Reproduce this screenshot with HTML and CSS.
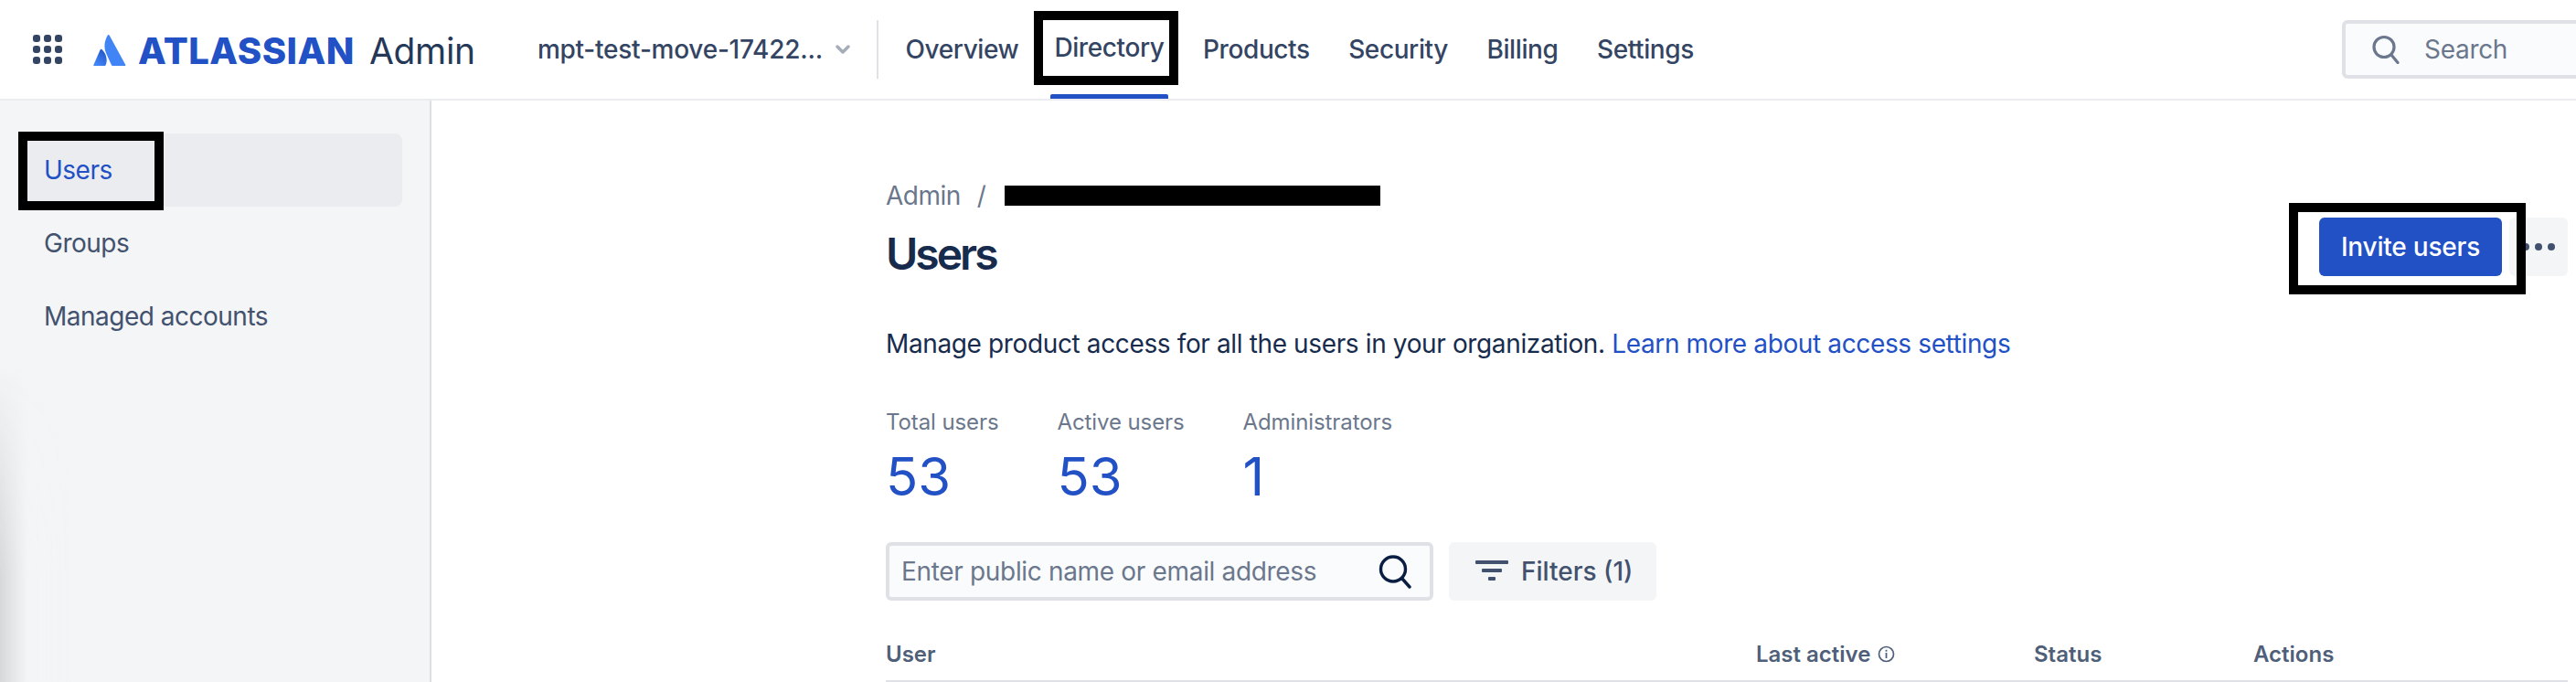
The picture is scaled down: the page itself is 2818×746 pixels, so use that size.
FILE: index.html
```html
<!DOCTYPE html>
<html lang="en">
<head>
<meta charset="utf-8">
<title>Users - Atlassian Admin</title>
<link rel="stylesheet" href="styles.css">
</head>
<body>
<header class="topbar">
  <svg class="apps" width="32" height="32" viewBox="0 0 32 32" aria-hidden="true">
    <g fill="#344563">
      <rect x="0" y="0" width="8" height="8" rx="3"/><rect x="12" y="0" width="8" height="8" rx="3"/><rect x="24" y="0" width="8" height="8" rx="3"/>
      <rect x="0" y="12" width="8" height="8" rx="3"/><rect x="12" y="12" width="8" height="8" rx="3"/><rect x="24" y="12" width="8" height="8" rx="3"/>
      <rect x="0" y="24" width="8" height="8" rx="3"/><rect x="12" y="24" width="8" height="8" rx="3"/><rect x="24" y="24" width="8" height="8" rx="3"/>
    </g>
  </svg>
  <svg class="mark" width="36" height="36" viewBox="0 0 36 36" aria-hidden="true">
    <defs>
      <linearGradient id="markGrad" x1="16" y1="18" x2="4" y2="33" gradientUnits="userSpaceOnUse">
        <stop offset="0" stop-color="#1f4fc4"/>
        <stop offset="1" stop-color="#4084f5"/>
      </linearGradient>
    </defs>
    <path fill="url(#markGrad)" d="M7.6 17.4 0.4 33.9C0 34.6.4 35 1.1 35H12.6C13 35 13.4 34.8 13.6 34.3 15.8 29.6 14.8 22.2 9.6 17.2 8.9 16.5 8.1 16.6 7.6 17.4Z"/>
    <path fill="#4084f5" d="M15.8 1.6C12.4 7.6 11.2 14.6 14.2 21.4L20 34.2C20.2 34.7 20.6 35 21.2 35H34.4C35.2 35 35.6 34.4 35.2 33.7L17.6 1.6C17.1.7 16.3.7 15.8 1.6Z"/>
  </svg>
  <span class="wordmark">ATLASSIAN</span>
  <span class="product">Admin</span>
  <button class="org">
    <span>mpt-test-move-17422...</span>
    <svg width="16" height="10" viewBox="0 0 16 10" aria-hidden="true"><path d="M2 2l6 6 6-6" fill="none" stroke="#a5adba" stroke-width="3.4" stroke-linecap="round" stroke-linejoin="round"/></svg>
  </button>
  <nav class="nav">
    <a class="nav-item">Overview</a>
    <a class="nav-item nav-item-active">Directory<i class="mark-box mark-box-nav"></i></a>
    <a class="nav-item">Products</a>
    <a class="nav-item">Security</a>
    <a class="nav-item">Billing</a>
    <a class="nav-item">Settings</a>
  </nav>
  <div class="global-search">
    <svg width="32" height="32" viewBox="0 0 32 32" aria-hidden="true"><circle cx="14" cy="13.5" r="11" fill="none" stroke="#6b778c" stroke-width="3.2"/><path d="M22 22l7 8.5" stroke="#6b778c" stroke-width="3.2" stroke-linecap="round"/></svg>
    <span>Search</span>
  </div>
</header>
<div class="shell">
  <aside class="sidebar">
    <a class="side-item side-item-active">Users<i class="mark-box mark-box-side"></i></a>
    <a class="side-item">Groups</a>
    <a class="side-item">Managed accounts</a>
  </aside>
  <main class="content">
    <div class="page-head">
      <div>
        <div class="crumbs"><span>Admin</span><span class="slash">/</span><span class="redacted"></span></div>
        <h1 class="title">Users</h1>
      </div>
      <div class="actions">
        <button class="invite">Invite users<i class="mark-box mark-box-invite"></i></button>
        <button class="more" aria-label="More">
          <svg width="36" height="8" viewBox="0 0 36 8" aria-hidden="true"><g fill="#42526e"><circle cx="4" cy="4" r="4"/><circle cx="18" cy="4" r="4"/><circle cx="32" cy="4" r="4"/></g></svg>
        </button>
      </div>
    </div>
    <p class="desc">Manage product access for all the users in your organization. <a class="link">Learn more about access settings</a></p>
    <div class="stats">
      <div class="stat"><div class="stat-label">Total users</div><div class="stat-value">53</div></div>
      <div class="stat"><div class="stat-label">Active users</div><div class="stat-value">53</div></div>
      <div class="stat"><div class="stat-label">Administrators</div><div class="stat-value">1</div></div>
    </div>
    <div class="toolbar">
      <div class="user-search">
        <span>Enter public name or email address</span>
        <svg width="36" height="37" viewBox="0 0 36 37" aria-hidden="true"><circle cx="16" cy="15.5" r="13.5" fill="none" stroke="#091e42" stroke-width="3.4"/><path d="M25.5 25.5l8.5 9.5" stroke="#091e42" stroke-width="3.4" stroke-linecap="round"/></svg>
      </div>
      <button class="filters">
        <svg width="36" height="24" viewBox="0 0 36 24" aria-hidden="true"><g fill="#42526e"><rect x="0" y="0" width="36" height="4" rx="1"/><rect x="7" y="9" width="22" height="4" rx="1"/><rect x="14" y="18" width="8" height="4" rx="1"/></g></svg>
        <span>Filters (1)</span>
      </button>
    </div>
    <div class="table-head">
      <span>User</span>
      <span class="th-info">Last active
        <svg width="19" height="19" viewBox="0 0 19 19" aria-hidden="true"><circle cx="9.5" cy="9.5" r="8" fill="none" stroke="#505f79" stroke-width="1.7"/><rect x="8.6" y="8" width="1.8" height="6" fill="#505f79"/><rect x="8.6" y="4.8" width="1.8" height="1.9" fill="#505f79"/></svg>
      </span>
      <span>Status</span>
      <span>Actions</span>
    </div>
  </main>
</div>
</body>
</html>
```
FILE: styles.css
```css
* { box-sizing: border-box; }
html, body { margin: 0; height: 746px; overflow: hidden; background: #fff; }
body { font-family: Inter, "Liberation Sans", sans-serif; color: #172b4d; width: 2818px; }
button { font: inherit; border: 0; padding: 0; margin: 0; }

.mark-box { position: absolute; border: 10px solid #000; pointer-events: none; z-index: 5; }
.mark-box-nav { left: -18px; right: -11px; top: 12px; bottom: 10px; }
.mark-box-side { left: -4px; width: 159px; top: -2px; bottom: -4px; }
.mark-box-invite { left: -33px; right: -26px; top: -16px; bottom: -20px; }

.topbar { height: 110px; display: flex; align-items: center; border-bottom: 2px solid #ebecf0; padding-left: 36px; flex: none; }
.apps { flex: none; }
.mark { margin-left: 34px; margin-top: 2px; flex: none; }
.wordmark { margin-left: 13px; font-size: 40px; font-weight: 800; letter-spacing: 0.5px; color: #2250c5; line-height: 48px; margin-top: 4px; }
.product { margin-left: 16px; font-size: 39px; letter-spacing: -0.3px; color: #253858; line-height: 48px; margin-top: 4px; }
.org { margin-left: 68px; display: flex; align-items: center; gap: 14px; background: none; color: #344563; font-size: 28px; font-weight: 500; letter-spacing: -0.24px; padding-right: 29px; border-right: 2px solid #dfe1e6; height: 64px; }

.nav { display: flex; gap: 33.5px; margin-left: 25px; height: 108px; }
.nav-item { position: relative; display: flex; align-items: center; padding: 0 4.5px; font-size: 28px; font-weight: 500; letter-spacing: -0.4px; color: #344563; }
.nav-item-active { margin-left: -3.5px; border-bottom: 5px solid transparent; }
.nav-item-active::after { content: ""; position: absolute; left: 0; right: 0; bottom: -5px; height: 5px; background: #2250c5; border-radius: 2px 2px 0 0; }

.global-search { margin-left: auto; width: 300px; height: 64px; margin-right: -44px; display: flex; align-items: center; gap: 26px; padding-left: 28px; background: #fafbfc; border: 4px solid #dfe1e6; border-radius: 6px; color: #6b778c; font-size: 28px; letter-spacing: -0.3px; flex: none; }

.shell { display: flex; height: 636px; }
.sidebar { position: relative; width: 472px; flex: none; background: #f4f5f7; border-right: 2px solid #dfdfe1; padding: 36px 30px 0 24px; }
.sidebar::after { content: ""; position: absolute; left: 0; top: 290px; bottom: 0; width: 80px; background: linear-gradient(90deg, #d6d8da, rgba(244,245,247,.55) 30px, rgba(244,245,247,0)); -webkit-mask-image: linear-gradient(180deg, transparent, #000 66%); mask-image: linear-gradient(180deg, transparent, #000 66%); pointer-events: none; }
.side-item { position: relative; display: flex; align-items: center; height: 80px; padding-left: 24px; font-size: 28px; letter-spacing: -0.5px; color: #42526e; border-radius: 8px; }
.side-item-active { background: #ebecf0; color: #2250c5; }

.content { flex: 1; padding: 88px 9px 0 497px; min-width: 0; }
.page-head { display: flex; justify-content: space-between; align-items: flex-start; }
.crumbs { display: flex; align-items: center; height: 32px; font-size: 28px; letter-spacing: -0.5px; color: #6b778c; }
.slash { margin-left: 18px; margin-right: 21px; }
.redacted { width: 411px; height: 22px; background: #000; }
.title { margin: 20px 0 0; font-size: 48px; line-height: 56px; font-weight: 600; letter-spacing: -3px; color: #172b4d; }
.actions { display: flex; gap: 8px; margin-top: 40px; }
.invite { position: relative; width: 200px; height: 64px; background: #2250c5; color: #fff; font-size: 28px; font-weight: 500; letter-spacing: -0.2px; border-radius: 6px; }
.more { width: 64px; height: 64px; background: #f4f5f7; border-radius: 6px; display: flex; align-items: center; justify-content: center; }

.desc { margin: 50px 0 0; font-size: 28px; line-height: 40px; letter-spacing: -0.37px; color: #172b4d; }
.link { color: #2250c5; }

.stats { display: flex; gap: 64px; margin-top: 50px; }
.stat-label { font-size: 24px; line-height: 32px; letter-spacing: -0.1px; color: #6b778c; }
.stat-value { margin-top: 8px; font-size: 58px; line-height: 70px; color: #2250c5; }

.toolbar { display: flex; gap: 17px; margin-top: 37px; }
.user-search { width: 599px; height: 64px; display: flex; align-items: center; justify-content: space-between; padding: 0 20px 0 13px; background: #fafbfc; border: 4px solid #dfe1e6; border-radius: 6px; font-size: 28px; letter-spacing: -0.33px; color: #6b778c; }
.filters { width: 227px; height: 64px; display: flex; align-items: center; gap: 14px; padding-left: 29px; background: #f4f5f7; border-radius: 6px; color: #42526e; font-size: 28px; font-weight: 500; }

.table-head { display: grid; grid-template-columns: 952px 304px 240px 1fr; align-items: center; height: 62px; margin-top: 27px; padding-top: 2px; border-bottom: 2px solid #dfe1e6; font-size: 24px; font-weight: 600; color: #505f79; }
.th-info { display: inline-flex; align-items: center; gap: 8px; }
```
